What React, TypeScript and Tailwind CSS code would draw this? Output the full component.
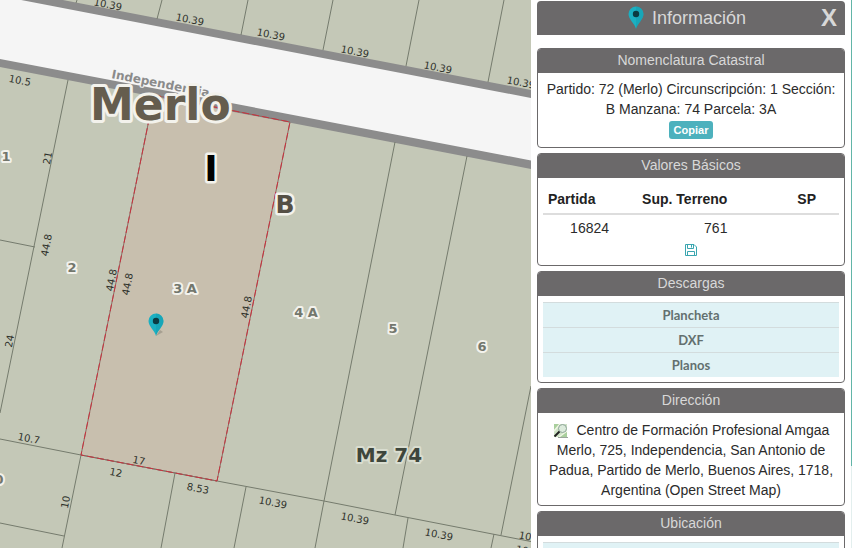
import type { ReactNode } from "react";

type Label = { x: number; y: number; text: string; angle: number };

const LOT_LINES = [
  "M77 0L76 3",
  "M162 0L157 19",
  "M248 0L241 35",
  "M333 0L323 50",
  "M419 0L406 66",
  "M504 0L488 82",
  "M68 80L0 413",
  "M0 240L35 247",
  "M395 142L324 501L315 548",
  "M467 156L395 515",
  "M531 386L501 535",
  "M0 439L81 455L217 481L324 501L395 515L600 555",
  "M81 455L62 548",
  "M0 523L64 536",
  "M175 473L161 548",
  "M246 487L234 548",
  "M408 518L403 548",
  "M494 534L491 548",
];

const MEASURES: Label[] = [
  { x: 108, y: 4, text: "10.39", angle: 11 },
  { x: 190, y: 19, text: "10.39", angle: 11 },
  { x: 271, y: 34, text: "10.39", angle: 11 },
  { x: 355, y: 51, text: "10.39", angle: 11 },
  { x: 438, y: 67, text: "10.39", angle: 11 },
  { x: 521, y: 82, text: "10.39", angle: 11 },
  { x: 20, y: 80, text: "10.5", angle: 11 },
  { x: 29, y: 438, text: "10.7", angle: 11 },
  { x: 139, y: 460, text: "17", angle: 11 },
  { x: 116, y: 472, text: "12", angle: 11 },
  { x: 198, y: 488, text: "8.53", angle: 11 },
  { x: 273, y: 502, text: "10.39", angle: 11 },
  { x: 355, y: 518, text: "10.39", angle: 11 },
  { x: 439, y: 534, text: "10.39", angle: 11 },
  { x: 533, y: 537, text: "10.39", angle: 11 },
  { x: 530, y: 551, text: "10.39", angle: 11 },
  { x: 47, y: 158, text: "21", angle: -79 },
  { x: 46, y: 245, text: "44.8", angle: -79 },
  { x: 111, y: 280, text: "44.8", angle: -79 },
  { x: 127, y: 284, text: "44.8", angle: -79 },
  { x: 246, y: 307, text: "44.8", angle: -79 },
  { x: 9, y: 341, text: "24", angle: -79 },
  { x: 65, y: 502, text: "10", angle: -79 },
];

const LOTS = [
  { x: 6, y: 161, text: "1" },
  { x: 72, y: 272, text: "2" },
  { x: 185, y: 293, text: "3 A" },
  { x: 306, y: 317, text: "4 A" },
  { x: 393, y: 333, text: "5" },
  { x: 482, y: 351, text: "6" },
  { x: -1, y: 484, text: "0" },
];

const DOWNLOADS = ["Plancheta", "DXF", "Planos"];

function Pin() {
  return (
    <>
      <path d="M8 23C7 18 0.500 13.500 0.500 8A7.500 7.500 0 0 1 15.500 8C15.500 13.500 9 18 8 23Z" fill="#1bb0c2" />
      <path d="M8 0.500A7.500 7.500 0 0 1 15.500 8C15.500 13.500 9 18 8 23Z" fill="#1299ab" opacity="0.4" />
      <circle cx="8" cy="8" r="3.200" fill="#0b3b42" />
    </>
  );
}

function SaveIcon() {
  return (
    <svg viewBox="0 0 14 14" className="size-[14px]" fill="none" stroke="#3aa6b0" aria-hidden="true">
      <path d="M1.500 1.500H10L12.500 4V12.500H1.500Z" />
      <path d="M3.500 1.500V5.500H9.500V1.500M3.500 12.500V8.500H10.500V12.500M7.500 2V4.500" />
    </svg>
  );
}

function MapSearchIcon() {
  return (
    <svg viewBox="0 0 16 16" className="mr-1 inline-block size-4 align-[-4px]" aria-hidden="true">
      <path d="M1 1H14V14H1Z" fill="#cfe3c6" />
      <path d="M1 1H7L1 8ZM9 11L14 8V14H6Z" fill="#a9cf9d" />
      <path d="M1 8L7 1M6 14L14 8" stroke="#f1f6e6" strokeWidth="1.500" />
      <circle cx="9.500" cy="5.500" r="4" fill="#dcebdc" stroke="#8fa59a" />
      <path d="M6.500 8.500L1.500 13.500" stroke="#222" strokeWidth="2" />
      <path d="M5 14.500H15" stroke="#9aa59a" />
    </svg>
  );
}

function CadastralMap() {
  return (
    <main className="min-w-0 flex-1 overflow-hidden bg-[#c4c8b7]">
      <svg className="block h-full w-full" fontFamily="'DejaVu Sans', sans-serif" role="img" aria-label="Mapa catastral">
        <path d="M154 95L290 122L217 481L81 455Z" fill="#c8bfae" />
        <path d="M-10 -14L900 161V240L-10 65Z" fill="#8c8c8c" />
        <path d="M-10 -6L900 169V231L-10 57Z" fill="#f5f5f5" />
        <g fill="none" stroke="#757b6d">
          {LOT_LINES.map((d) => (
            <path key={d} d={d} />
          ))}
        </g>
        <path d="M154 95L290 122L217 481L81 455Z" fill="none" stroke="#8a6a62" />
        <path d="M154 95L290 122L217 481L81 455Z" fill="none" stroke="#c8323f" strokeDasharray="7 3" />

        <g fontSize="10" fill="#2e312b" textAnchor="middle">
          {MEASURES.map((m) => (
            <text key={`${m.x}-${m.y}`} x={m.x} y={m.y} dy="4" transform={`rotate(${m.angle} ${m.x} ${m.y})`}>
              {m.text}
            </text>
          ))}
        </g>

        <g fontWeight="bold" stroke="#f3f2ec" strokeLinejoin="round" paintOrder="stroke">
          <text x="111" y="78" fontSize="12" fill="#8b8b8b" stroke="#f5f5f5" strokeWidth="2" transform="rotate(11 111 78)">
            Independencia
          </text>
          <g fontSize="13" fill="#73776d" strokeWidth="4" textAnchor="middle">
            {LOTS.map((l) => (
              <text key={l.text} x={l.x} y={l.y}>
                {l.text}
              </text>
            ))}
          </g>
          <text x="90" y="120" fontSize="44" fill="#655d4e" strokeWidth="6">Merlo</text>
          <text x="211" y="181" fontSize="36" fill="#000" strokeWidth="5" textAnchor="middle">I</text>
          <text x="285" y="213" fontSize="25" fill="#554f45" strokeWidth="5" textAnchor="middle">B</text>
          <text x="389" y="462" fontSize="20" fill="#3e463c" stroke="#d9ddd0" strokeWidth="4" textAnchor="middle">Mz 74</text>
        </g>

        <path d="M156 336L163 332L160 330Z" fill="#8f8a7d" opacity="0.6" />
        <g transform="translate(148 313)">
          <Pin />
        </g>
      </svg>
    </main>
  );
}

function Card({ title, children }: { title: string; children: ReactNode }) {
  return (
    <section className="shrink-0 overflow-hidden rounded border border-[#6b696a] bg-white">
      <h2 className="h-6 bg-[#6b696a] text-center text-sm leading-[23px] text-[#d8d8d8]">{title}</h2>
      <div className="px-[5px] pt-1.5 pb-[5px]">{children}</div>
    </section>
  );
}

export default function App() {
  return (
    <div className="flex h-screen overflow-hidden bg-white font-['Liberation_Sans',Arial,sans-serif] text-sm leading-5 text-[#2b2b2b]">
      <CadastralMap />

      <aside className="flex w-[321px] shrink-0">
        <div className="flex min-w-0 flex-1 flex-col gap-[5px] overflow-hidden px-1.5 pt-px">
          <header className="mb-2 flex h-[34px] shrink-0 items-center rounded-t bg-[#6b696a] px-2 text-[#d8d8d8]">
            <h1 className="flex flex-1 items-center justify-center gap-2 pl-2 text-lg leading-8">
              <svg viewBox="0 0 16 24" className="h-6 w-4" aria-hidden="true">
                <Pin />
              </svg>
              Información
            </h1>
            <button type="button" aria-label="Cerrar" className="text-2xl leading-8 font-bold">
              X
            </button>
          </header>

          <Card title="Nomenclatura Catastral">
            <div className="flex flex-col items-center gap-0.5 pb-[3px] text-center">
              <p>Partido: 72 (Merlo) Circunscripción: 1 Sección: B Manzana: 74 Parcela: 3A</p>
              <button type="button" className="h-[18px] rounded-[3px] bg-[#4db1bd] px-[5px] text-[11px] leading-4 font-bold text-white">
                Copiar
              </button>
            </div>
          </Card>

          <Card title="Valores Básicos">
            <table className="w-full table-fixed">
              <thead>
                <tr className="border-b-2 border-[#ddd] text-[#222]">
                  <th className="w-[24%] px-[5px] py-1 pt-[5px] text-left">Partida</th>
                  <th className="w-[40%] px-[5px] py-1 pt-[5px] text-right">Sup. Terreno</th>
                  <th className="py-1 pt-[5px] pr-[23px] text-right">SP</th>
                </tr>
              </thead>
              <tbody>
                <tr>
                  <td className="px-[5px] pt-[3px] text-right">16824</td>
                  <td className="px-[5px] pt-[3px] text-right">761</td>
                  <td />
                </tr>
              </tbody>
            </table>
            <button type="button" aria-label="Guardar" className="mx-auto mt-[5px] mb-[3px] block">
              <SaveIcon />
            </button>
          </Card>

          <Card title="Descargas">
            <ul>
              {DOWNLOADS.map((name) => (
                <li key={name} className="border-t border-[#d3dcdd] bg-[#e0f2f5]">
                  <a href="#" className="block text-center font-['Lato','Open_Sans',sans-serif] text-[13px] leading-6 font-bold text-[#63706f]">
                    {name}
                  </a>
                </li>
              ))}
            </ul>
          </Card>

          <Card title="Dirección">
            <p className="pt-px text-center">
              <MapSearchIcon /> Centro de Formación Profesional Amgaa Merlo, 725, Independencia, San Antonio de Padua,
              Partido de Merlo, Buenos Aires, 1718, Argentina (Open Street Map)
            </p>
          </Card>

          <Card title="Ubicación">
            <div className="h-6 border-t border-[#d3dcdd] bg-[#e0f2f5]" />
          </Card>
        </div>

        {/* Scroll indicator */}
        <div className="w-px bg-[#e3efee]">
          <div className="h-[85%] bg-[#62b5a8]" />
        </div>
      </aside>
    </div>
  );
}
